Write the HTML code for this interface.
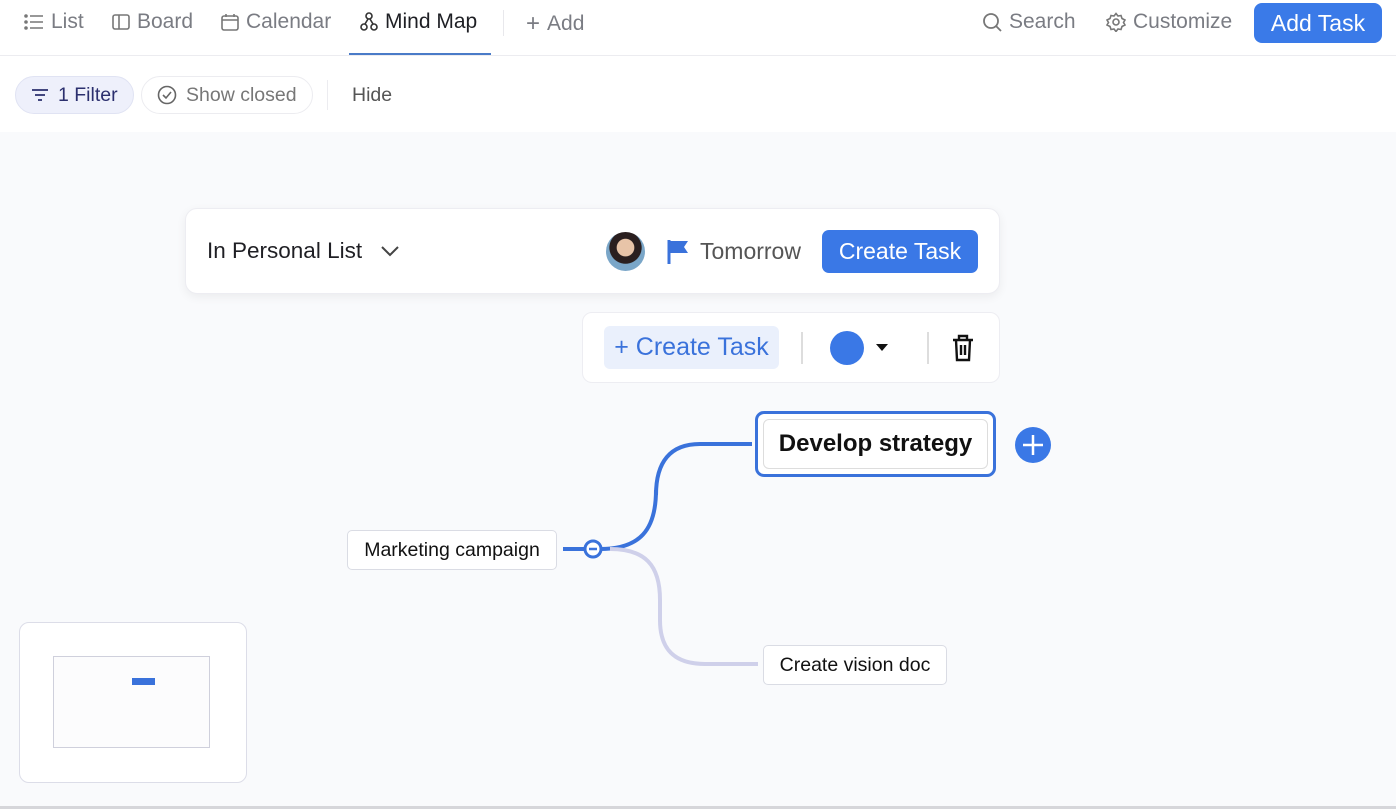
<!DOCTYPE html>
<html><head><style>
*{margin:0;padding:0;box-sizing:border-box}
body{width:1396px;height:809px;overflow:hidden;background:#fff;font-family:"Liberation Sans",sans-serif;position:relative}
.a{position:absolute}
.tab{position:absolute;top:10px;font-size:21px;color:#7a7c83;display:flex;align-items:center;gap:7px}
.canvas{position:absolute;left:0;top:132px;width:1396px;height:674px;background:#f9fafc}
.pill{position:absolute;height:38px;border-radius:19px;display:flex;align-items:center;font-size:19.5px}
</style></head><body>
<div class="a" style="left:0;top:55px;width:1396px;height:1px;background:#ececf0"></div>
<div class="tab" style="left:24px"><svg width="20" height="18" viewBox="0 0 20 18" fill="none" stroke="#777" stroke-width="1.6"><circle cx="2" cy="3" r="1" fill="#777"/><circle cx="2" cy="9" r="1" fill="#777"/><circle cx="2" cy="15" r="1" fill="#777"/><path d="M6 3h13M6 9h13M6 15h13"/></svg>List</div>
<div class="tab" style="left:112px"><svg width="18" height="18" viewBox="0 0 18 18" fill="none" stroke="#777" stroke-width="1.6"><rect x="1" y="2" width="16" height="14" rx="2"/><path d="M7 2v14"/></svg>Board</div>
<div class="tab" style="left:221px"><svg width="18" height="18" viewBox="0 0 18 18" fill="none" stroke="#777" stroke-width="1.6"><rect x="1" y="3" width="16" height="14" rx="2"/><path d="M1 7h16M5 1v3M13 1v3"/></svg>Calendar</div>
<div class="tab" style="left:360px;color:#1e1f24"><svg width="18" height="20" viewBox="0 0 18 20" fill="none" stroke="#333" stroke-width="1.6"><circle cx="9" cy="4" r="3"/><circle cx="4" cy="15" r="3"/><circle cx="14" cy="15" r="3"/><path d="M8 7l-3 5M10 7l3 5"/></svg>Mind Map</div>
<div class="a" style="left:349px;top:53px;width:142px;height:2px;background:#4a7bc8"></div>
<div class="a" style="left:503px;top:10px;width:1px;height:26px;background:#e8e8ec"></div>
<div class="tab" style="left:526px"><span style="font-size:24px;font-weight:300">+</span>Add</div>
<div class="tab" style="left:982px"><svg width="20" height="20" viewBox="0 0 20 20" fill="none" stroke="#777" stroke-width="1.8"><circle cx="9" cy="9" r="7"/><path d="M14 14l5 5"/></svg>Search</div>
<div class="tab" style="left:1106px"><svg width="20" height="20" viewBox="0 0 20 20" fill="none" stroke="#777" stroke-width="1.6"><circle cx="10" cy="10" r="3"/><path d="M10 1.5l2 2.5 3-.5 1 3 3 1.5-1.5 2.5 1.5 2.5-3 1.5-1 3-3-.5-2 2.5-2-2.5-3 .5-1-3-3-1.5 1.5-2.5-1.5-2.5 3-1.5 1-3 3 .5z"/></svg>Customize</div>
<div class="a" style="left:1254px;top:3px;width:128px;height:40px;background:#3a7ae8;border-radius:8px;color:#fff;font-size:23px;display:flex;align-items:center;justify-content:center">Add Task</div>

<div class="pill" style="left:15px;top:76px;width:119px;background:#eef0fb;border:1px solid #e0e3f3;color:#2b2f6e;padding-left:15px;gap:9px"><svg width="18" height="14" viewBox="0 0 18 14" stroke="#2b2f6e" stroke-width="1.8"><path d="M1 2h16M4 7h10M7 12h4"/></svg>1 Filter</div>
<div class="pill" style="left:141px;top:76px;width:172px;border:1px solid #ececf0;color:#777;padding-left:15px;gap:9px"><svg width="20" height="20" viewBox="0 0 20 20" fill="none" stroke="#666" stroke-width="1.6"><circle cx="10" cy="10" r="8.5"/><path d="M6 10l3 3 5-6"/></svg>Show closed</div>
<div class="a" style="left:327px;top:80px;width:1px;height:30px;background:#ececf0"></div>
<div class="a" style="left:352px;top:84px;font-size:19.5px;color:#555">Hide</div>

<div class="canvas"></div>
<svg class="a" style="left:0;top:0" width="1396" height="809">
<path d="M563 549H600C640 549 656 530 656 490V495C656 462 670 444 700 444H752" fill="none" stroke="#3a72db" stroke-width="4"/>
<path d="M610 549C645 549 660 565 660 600V620C660 650 675 664 705 664H758" fill="none" stroke="#cfd0ea" stroke-width="4"/>
<circle cx="593" cy="549" r="8" fill="#fff" stroke="#3a72db" stroke-width="3"/><path d="M589 549h8" stroke="#3a72db" stroke-width="2.5"/>
<circle cx="1033" cy="445" r="18" fill="#3a78e6"/><path d="M1033 435v20M1023 445h20" stroke="#fff" stroke-width="2.5"/>
</svg>
<div class="a" style="left:185px;top:208px;width:815px;height:86px;background:#fff;border:1px solid #ededf2;border-radius:12px;box-shadow:0 3px 10px rgba(0,0,0,.06)"></div>
<div class="a" style="left:207px;top:238px;font-size:22.5px;color:#1f1f24">In Personal List</div>
<svg class="a" style="left:380px;top:244px" width="20" height="14" viewBox="0 0 20 14" fill="none" stroke="#444" stroke-width="2"><path d="M2 3l8 8 8-8"/></svg>
<div class="a" style="left:606px;top:232px;width:39px;height:39px;border-radius:50%;background:radial-gradient(circle at 50% 40%,#e8c4a8 0 28%,#2a1f1f 30% 52%,#7aa6c8 54%)"></div>
<svg class="a" style="left:666px;top:238px" width="24" height="28" viewBox="0 0 24 28"><path d="M3 2v24" stroke="#3a72db" stroke-width="3"/><path d="M4 3h18l-4 6 4 6H4z" fill="#3a72db"/></svg>
<div class="a" style="left:700px;top:238px;font-size:23px;color:#555">Tomorrow</div>
<div class="a" style="left:822px;top:230px;width:156px;height:43px;background:#3a78e6;border-radius:7px;color:#fff;font-size:23px;display:flex;align-items:center;justify-content:center">Create Task</div>

<div class="a" style="left:582px;top:312px;width:418px;height:71px;background:#fff;border:1px solid #ededf2;border-radius:10px"></div>
<div class="a" style="left:604px;top:326px;width:175px;height:43px;background:#eaf0fc;border-radius:6px;color:#3a72db;font-size:25px;display:flex;align-items:center;justify-content:center">+ Create Task</div>
<div class="a" style="left:801px;top:332px;width:2px;height:32px;background:#ddd"></div>
<div class="a" style="left:830px;top:331px;width:34px;height:34px;border-radius:50%;background:#3a78e6"></div>
<div class="a" style="left:876px;top:344px;width:0;height:0;border-left:6px solid transparent;border-right:6px solid transparent;border-top:7px solid #111"></div>
<div class="a" style="left:927px;top:332px;width:2px;height:32px;background:#ddd"></div>
<svg class="a" style="left:951px;top:334px" width="24" height="28" viewBox="0 0 24 28" fill="none" stroke="#111" stroke-width="2.4"><path d="M2 6h20M8 6V2h8v4M5 6l1 20h12l1-20M10 11v10M14 11v10"/></svg>

<div class="a" style="left:755px;top:411px;width:241px;height:66px;border:3px solid #3a72db;border-radius:9px;background:#fff"></div>
<div class="a" style="left:763px;top:419px;width:225px;height:50px;border:1px solid #ddd;border-radius:6px;font-size:24px;font-weight:bold;color:#111;display:flex;align-items:center;justify-content:center">Develop strategy</div>
<div class="a" style="left:347px;top:530px;width:210px;height:40px;background:#fff;border:1px solid #dadce4;border-radius:5px;font-size:19.5px;color:#111;display:flex;align-items:center;justify-content:center">Marketing campaign</div>
<div class="a" style="left:763px;top:645px;width:184px;height:40px;background:#fff;border:1px solid #dadce4;border-radius:5px;font-size:19.5px;color:#111;display:flex;align-items:center;justify-content:center">Create vision doc</div>

<div class="a" style="left:19px;top:622px;width:228px;height:161px;background:#fff;border:1.5px solid #dcdde8;border-radius:10px"></div>
<div class="a" style="left:53px;top:656px;width:157px;height:92px;border:1.5px solid #cfd0dc;background:#fcfcfd"></div>
<div class="a" style="left:132px;top:678px;width:23px;height:7px;background:#3a72db"></div>
<div class="a" style="left:0;top:806px;width:1396px;height:3px;background:#d6d6da"></div>
</body></html>
